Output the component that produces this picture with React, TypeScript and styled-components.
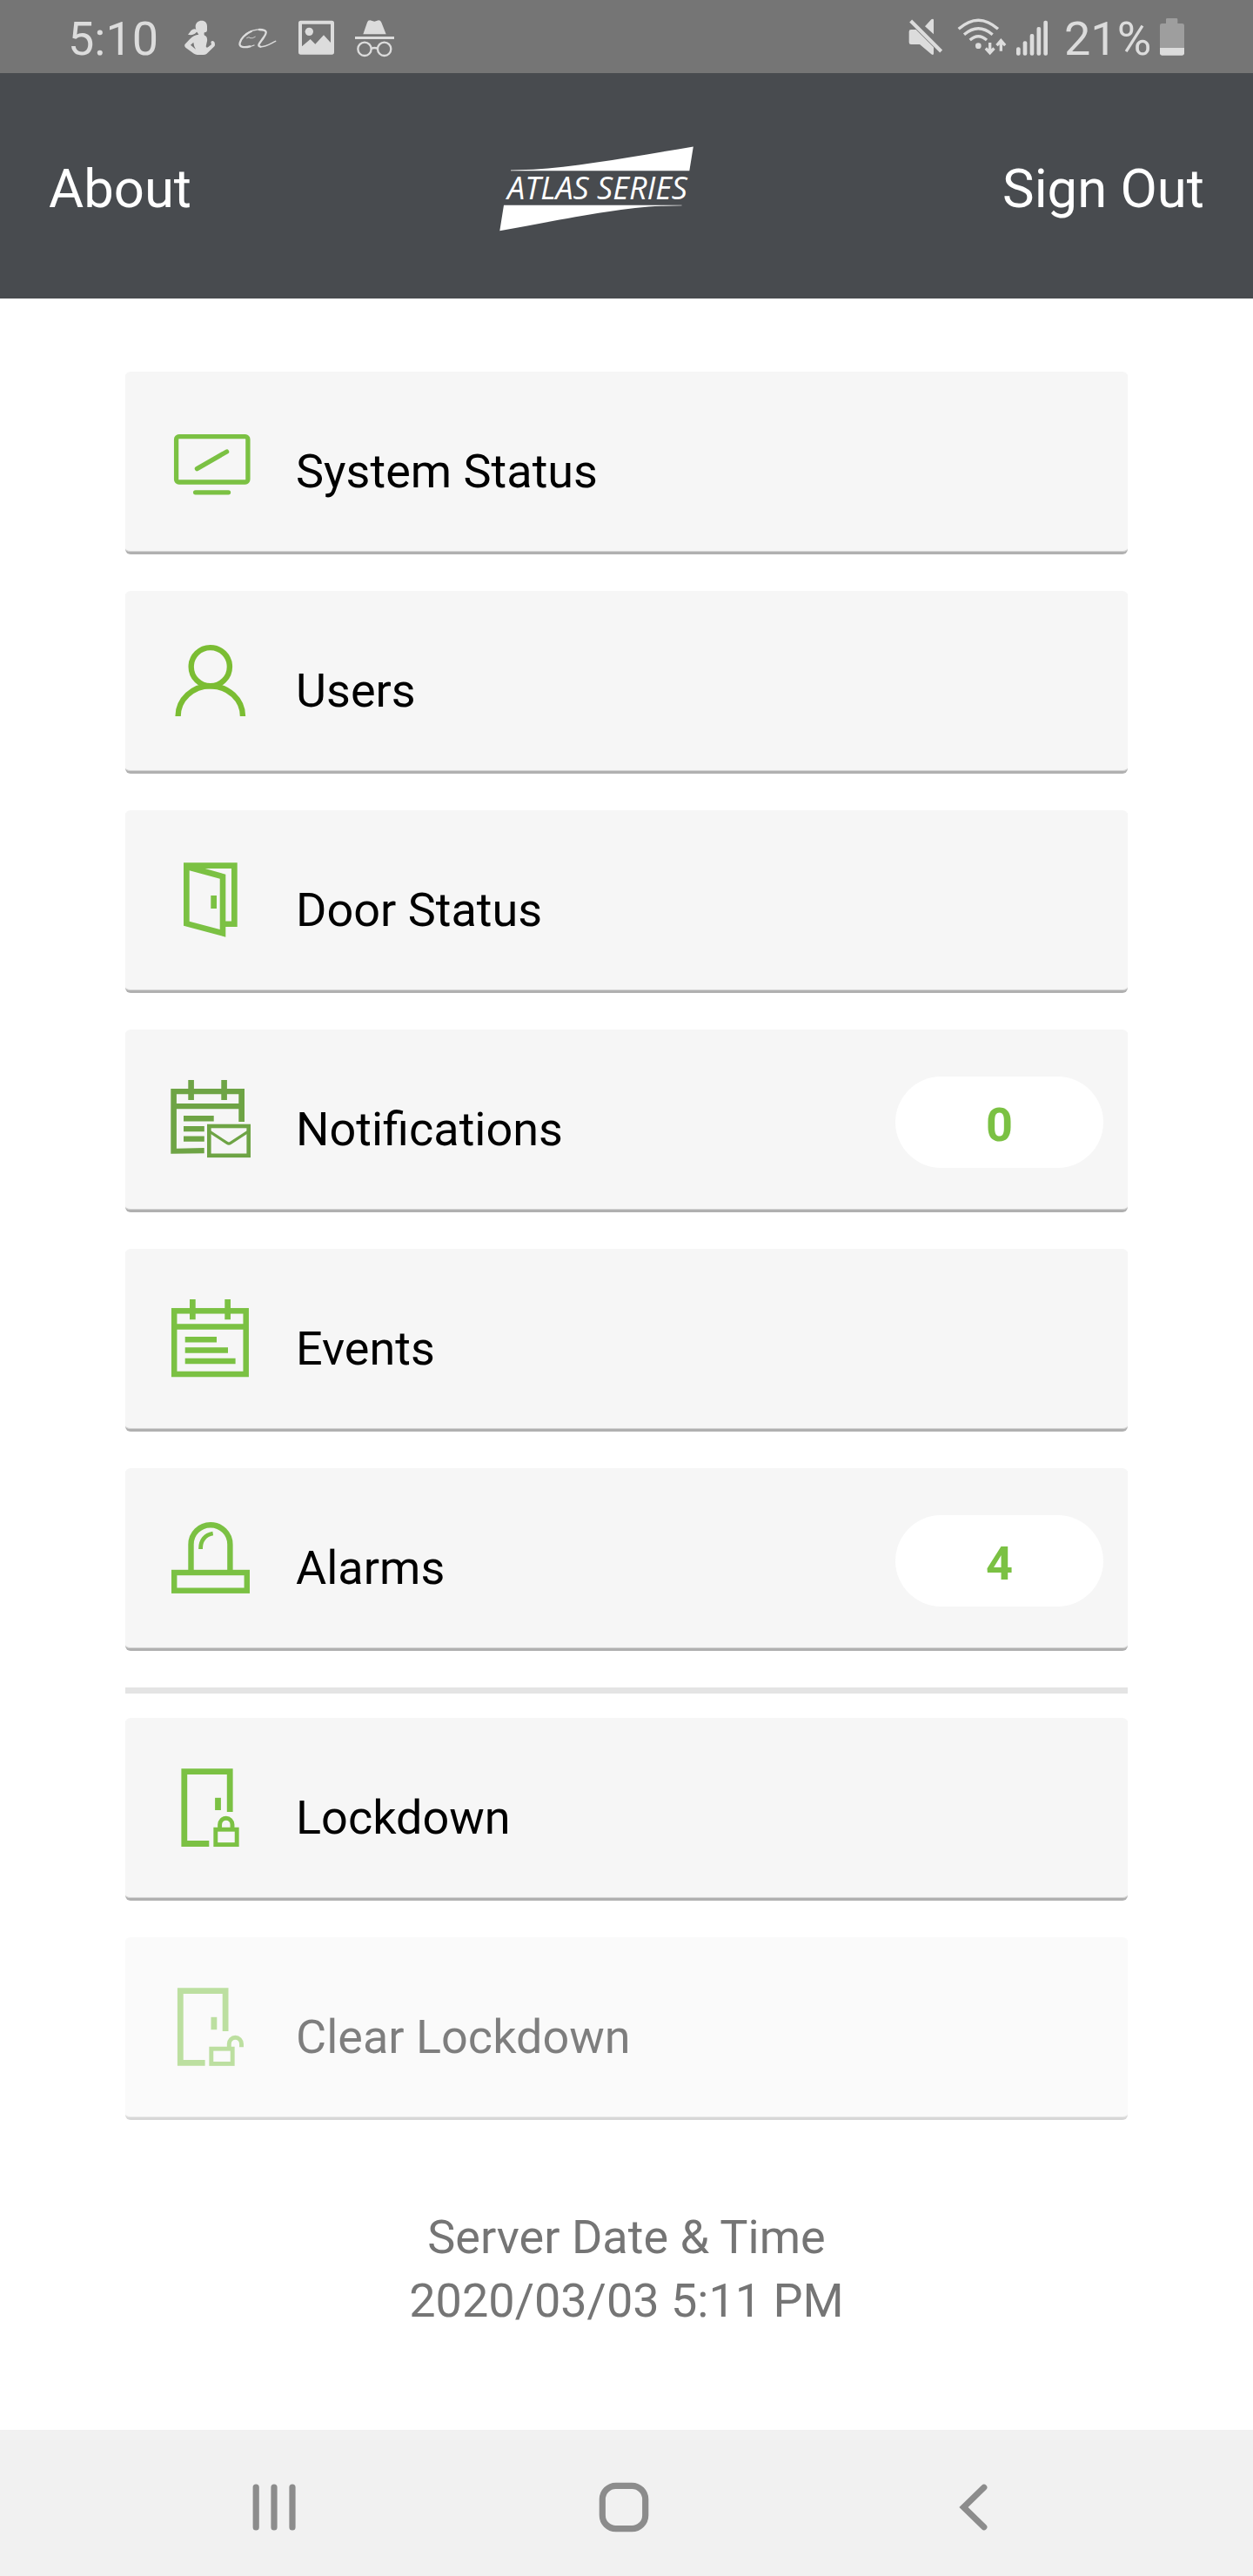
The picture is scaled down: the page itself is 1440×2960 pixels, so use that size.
import React from "react";
import styled, { createGlobalStyle } from "styled-components";

const GREEN = "#7bc143";
const DARK_GREEN = "#6ea445";
const STATUS_INK = "#dcdcdc";

const GlobalStyle = createGlobalStyle`
  body {
    margin: 0;
    background: #fff;
    font-family: Roboto, "Liberation Sans", sans-serif;
  }
`;

const Screen = styled.div`
  display: flex;
  flex-direction: column;
  width: 1440px;
  height: 2960px;
  overflow: hidden;
`;

const StatusBar = styled.div`
  display: flex;
  justify-content: space-between;
  flex: none;
  height: 84px;
  padding: 0 79px 0 78px;
  background: #757575;
  color: ${STATUS_INK};
  font-size: 54px;
  line-height: 89px;
`;

const StatusGroup = styled.div`
  display: flex;
  height: 84px;
`;

const StatusText = styled.span<{ $width: number; $gap?: number }>`
  flex: none;
  width: ${(p) => p.$width}px;
  margin-left: ${(p) => p.$gap ?? 0}px;
  white-space: nowrap;
`;

const StatusGlyph = styled.svg<{ $gap?: number }>`
  display: block;
  flex: none;
  height: 84px;
  margin-left: ${(p) => p.$gap ?? 0}px;
  fill: ${STATUS_INK};
`;

const Header = styled.header`
  display: flex;
  justify-content: space-between;
  align-items: center;
  flex: none;
  box-sizing: border-box;
  height: 259px;
  padding: 7px 56px 0;
  background: #484b4f;
`;

const HeaderLink = styled.a`
  color: #fff;
  font-size: 61.6px;
  line-height: 72px;
  white-space: nowrap;
`;

const Logo = styled.svg`
  display: block;
  flex: none;
`;

const LogoText = styled.text`
  font-family: "Open Sans", "Noto Sans", sans-serif;
  font-style: italic;
  font-size: 36px;
  fill: #fff;
`;

const Menu = styled.main`
  display: flex;
  flex-direction: column;
  gap: 42px;
  padding: 84px 144px 0;
`;

const Card = styled.div<{ $disabled?: boolean }>`
  display: flex;
  align-items: flex-start;
  box-sizing: border-box;
  height: 210px;
  padding: 0 28px 0 48px;
  border-radius: 6px;
  border-bottom: 3px solid #b0b0b0;
  box-shadow: inset 0 -1px 0 #d3d3d3;
  background: #f6f6f6;
  opacity: ${(p) => (p.$disabled ? 0.5 : 1)};
`;

const CardIcon = styled.svg<{ $color?: string }>`
  display: block;
  flex: none;
  width: 104px;
  height: 104px;
  margin-top: 48px;
  color: ${(p) => p.$color ?? GREEN};
`;

const CardLabel = styled.span`
  flex: 1;
  margin: 82px 0 0 44px;
  color: #000;
  font-size: 54px;
  line-height: 65px;
  white-space: nowrap;
`;

const Badge = styled.span`
  width: 239px;
  height: 105px;
  margin-top: 54px;
  border-radius: 53px;
  background: #fff;
  color: ${GREEN};
  font-size: 54px;
  font-weight: 700;
  line-height: 111px;
  text-align: center;
`;

const Divider = styled.hr`
  width: 100%;
  height: 7px;
  margin: 0 0 -14px;
  border: 0;
  background: #e4e4e4;
`;

const ServerTime = styled.footer`
  margin-top: 98px;
  color: #757575;
  font-size: 54px;
  line-height: 73px;
  text-align: center;
`;

const NavBar = styled.nav`
  display: flex;
  justify-content: center;
  flex: none;
  box-sizing: border-box;
  height: 168px;
  margin-top: auto;
  padding: 9px 7px 0 0;
  background: #f1f1f1;
`;

const NavButton = styled.div`
  display: flex;
  align-items: center;
  justify-content: center;
  width: 402px;
`;

const NavGlyph = styled.svg`
  width: 60px;
  height: 60px;
  fill: none;
  stroke: #8c8c8c;
  stroke-width: 7.2;
  stroke-linecap: round;
`;

const MonitorIcon = () => (
  <CardIcon viewBox="0 0 104 104" fill="none" stroke="currentColor" strokeWidth="5.3" strokeLinecap="round">
    <rect x="10.6" y="26.7" width="82.3" height="52.3" rx="3" />
    <path d="M34.4 63.6 68.6 44" />
    <path d="M32.6 90.8H70.5" />
  </CardIcon>
);

const UserIcon = () => (
  <CardIcon viewBox="0 0 104 104" fill="none" stroke="currentColor" strokeWidth="6.4" $color="#7bbd33">
    <circle cx="49.8" cy="39.2" r="22.1" />
    <path d="M12.6 96A37.2 34.8 0 0 1 87 96" />
  </CardIcon>
);

const DoorIcon = () => (
  <CardIcon viewBox="0 0 104 104" fill="currentColor">
    <path
      fillRule="evenodd"
      d="M19 12.3H80.7V86H67.3V97.7L19 84.7ZM43.7 18.9 67.3 25.7V79.4H74V18.9ZM25.7 21.3 60.7 30.7V89L25.7 79.7Z"
    />
    <path d="M50.3 50H57V65H50.3Z" />
  </CardIcon>
);

const NotificationsIcon = () => (
  <CardIcon viewBox="0 0 104 104" fill="currentColor" $color={DARK_GREEN}>
    <path d="M4.3 20H89V58H82.3V26.3H10.9V88.8L42.7 88V94.2L4.3 94.8Z" />
    <path d="M8 37H85V43.3H8ZM24.3 10H30.9V33H24.3ZM62.3 10H68.9V33H62.3Z" />
    <path d="M19 51H53.7V57.4H19ZM19 63H42.8V69.3H19ZM19 74.4H42.8V80.8H19Z" />
    <rect x="48.3" y="63" width="45.4" height="33.8" fill="none" stroke="currentColor" strokeWidth="4.6" />
    <path d="M49.5 69.6 69 82.4Q71 83.8 73 82.4L92.5 69.6" fill="none" stroke="currentColor" strokeWidth="3.2" />
  </CardIcon>
);

const EventsIcon = () => (
  <CardIcon viewBox="0 0 104 104" fill="currentColor">
    <rect x="8.2" y="23.3" width="82.5" height="72.7" fill="none" stroke="currentColor" strokeWidth="6.5" />
    <path d="M8 38.2H91V44.8H8ZM26 10H32.7V33.3H26ZM66.3 10H73V33.3H66.3Z" />
    <path d="M20.7 53H57V59.6H20.7ZM20.7 65.2H70V71.8H20.7ZM20.7 77.7H78.6V84.3H20.7Z" />
  </CardIcon>
);

const AlarmIcon = () => (
  <CardIcon viewBox="0 0 104 104" fill="none" stroke="currentColor" strokeWidth="6.4">
    <rect x="8.2" y="72" width="83.6" height="20.7" />
    <path d="M27.5 70V39.7a22.4 22.4 0 0 1 44.9 0V70" />
    <path d="M38.6 45C38.2 35.5 43.5 28.5 52.7 27" strokeWidth="4.8" />
  </CardIcon>
);

const LockdownIcon = () => (
  <CardIcon viewBox="0 0 104 104" fill="none" stroke="currentColor" strokeWidth="6.8">
    <path d="M48.3 96.5H19.8V13.6H72.2V60" />
    <path d="M58.5 43.8V58" />
    <g strokeWidth="4.9">
      <rect x="55.8" y="80.2" width="24.4" height="17.4" />
      <path d="M60.6 80V74.6a7.2 7.4 0 0 1 14.4 0V80" />
    </g>
  </CardIcon>
);

const ClearLockdownIcon = () => (
  <CardIcon viewBox="0 0 104 104" fill="none" stroke="currentColor" strokeWidth="6.8">
    <path d="M43.6 96.4H15.3V13.6H67.1V60" />
    <path d="M53.9 43.8V58.2" />
    <g strokeWidth="4.9">
      <rect x="50.8" y="80.2" width="24.4" height="17.2" />
      <path d="M71.3 80V74.6a7.1 7.4 0 0 1 14.2 0V78.3" />
    </g>
  </CardIcon>
);

type Item = { label: string; Icon: React.FC; badge?: number; disabled?: boolean };

const mainItems: Item[] = [
  { label: "System Status", Icon: MonitorIcon },
  { label: "Users", Icon: UserIcon },
  { label: "Door Status", Icon: DoorIcon },
  { label: "Notifications", Icon: NotificationsIcon, badge: 0 },
  { label: "Events", Icon: EventsIcon },
  { label: "Alarms", Icon: AlarmIcon, badge: 4 },
];

const lockItems: Item[] = [
  { label: "Lockdown", Icon: LockdownIcon },
  { label: "Clear Lockdown", Icon: ClearLockdownIcon, disabled: true },
];

const MenuCard = ({ label, Icon, badge, disabled }: Item) => (
  <Card $disabled={disabled}>
    <Icon />
    <CardLabel>{label}</CardLabel>
    {badge !== undefined && <Badge>{badge}</Badge>}
  </Card>
);

const SystemStatusBar = () => (
  <StatusBar>
    <StatusGroup>
      <StatusText $width={134}>5:10</StatusText>
      <StatusGlyph width="36" viewBox="636 0 108 252">
        <path
          fillRule="evenodd"
          d="M674 92C674 78 684 71 695 71C707 71 714 79 714 90V105Q713 113 705 111C702 118 704 121 709 124Q716 130 714 142L710 160Q712 167 718 162L729 153Q724 140 733 141Q741 142 741 155Q741 159 736 163L712 186Q708 189 700 189H680Q674 188 669 185L640 164Q634 158 638 152L655 134Q668 120 685 119Q682 115 679 110Q676 112 672 116Q662 123 648 119Q655 112 658 106Q668 97 676 101Q674 97 674 92ZM657 155 667 146Q668 160 675 170Z"
        />
      </StatusGlyph>
      <StatusGlyph width="44" $gap={26} viewBox="822 0 132 252">
        <g fill="none" stroke={STATUS_INK} strokeLinecap="round">
          <path strokeWidth="7" d="M862 160C842 165 823 163 827 148C830 134 845 117 866 108" />
          <path strokeWidth="4" d="M876 156C868 160 862 161 852 161M846 120C860 108 880 101 902 101" />
          <path strokeWidth="7" d="M894 102C924 103 920 113 909 129C897 147 884 158 898 161" />
          <path strokeWidth="4.5" d="M898 161.500C918 161 933 150 950 142" />
          <path strokeWidth="2.500" d="M851 131Q862 125 861 131Q870 134 880 127" />
        </g>
      </StatusGlyph>
      <StatusGlyph width="41" $gap={25} viewBox="1029 0 123 252">
        <path
          fillRule="evenodd"
          d="M1037 71H1144Q1152 71 1152 79V180Q1152 188 1144 188H1037Q1029 188 1029 180V79Q1029 71 1037 71ZM1041 83V160L1070 135 1087 152 1116 121 1140 147V83Z"
        />
        <circle cx="1066" cy="109" r="14" />
      </StatusGlyph>
      <StatusGlyph width="46" $gap={24} viewBox="1224 0 138 252">
        <path d="M1252 118 1266 77Q1268 70 1276 70L1291 74 1305 70Q1312 70 1315 77L1331 118ZM1224 126H1359V135H1224Z" />
        <g fill="none" stroke={STATUS_INK} strokeWidth="7">
          <circle cx="1257" cy="169" r="23" />
          <circle cx="1325" cy="169" r="23" />
          <path d="M1279 168Q1291 162 1303 168" />
        </g>
      </StatusGlyph>
    </StatusGroup>
    <StatusGroup>
      <StatusGlyph width="40" viewBox="132 0 120 252">
        <path d="M189 91 211 67Q219 63 219 70V118ZM134 109Q134 102 141 102H158L219 163V184Q219 192 211 187L171 153H141Q134 153 134 146Z" />
        <path d="M140 72 245 177" fill="none" stroke={STATUS_INK} strokeWidth="12.5" />
      </StatusGlyph>
      <StatusGlyph width="57" $gap={16} viewBox="300 0 171 252">
        <g fill="none" stroke={STATUS_INK} strokeWidth="10">
          <path d="M305 100Q373 39 441 100" />
          <path d="M324 119Q373 77 422 119" />
          <path d="M344 138Q373 112 402 138" />
        </g>
        <circle cx="373" cy="158" r="10" />
        <path d="M408 147h10v22l6-6 7 7-18 20-18-20 7-7 6 6zM446 176v-22l-6 6-7-7 18-21 18 21-7 7-6-6v22z" />
      </StatusGlyph>
      <StatusGlyph width="36" $gap={11} viewBox="504 0 108 252">
        <rect x="504" y="163" width="14" height="28" rx="6" />
        <rect x="527" y="142" width="14" height="49" rx="6" />
        <rect x="551" y="117" width="14" height="74" rx="6" />
        <rect x="574.5" y="93" width="14" height="98" rx="6" />
        <rect x="598" y="71" width="14" height="120" rx="6" />
      </StatusGlyph>
      <StatusText $width={110} $gap={19}>
        21%
      </StatusText>
      <StatusGlyph width="28" viewBox="999 0 84 252">
        <path fill="#9e9e9e" d="M999 88Q999 81 1006 81H1020V67Q1020 63 1024 63H1056Q1060 63 1060 67V81H1076Q1083 81 1083 88V165H999Z" />
        <path d="M999 165H1083V184Q1083 191 1076 191H1006Q999 191 999 184Z" />
      </StatusGlyph>
    </StatusGroup>
  </StatusBar>
);

export default function App() {
  return (
    <Screen>
      <GlobalStyle />
      <SystemStatusBar />
      <Header>
        <HeaderLink>About</HeaderLink>
        <Logo width="224" height="98" viewBox="34 28.5 224 98" fill="#fff">
          <path d="M47 56.7V55.9L73 55.3C125 52 190 40 256.8 29L252.3 56.7Z" />
          <path d="M39 96.2H243.5V96.8L220 97.2C170 99 100 114 34.3 125.8Z" />
          <LogoText x="43" y="89" textLength="207" lengthAdjust="spacingAndGlyphs">
            ATLAS SERIES
          </LogoText>
        </Logo>
        <HeaderLink>Sign Out</HeaderLink>
      </Header>
      <Menu>
        {mainItems.map((item) => (
          <MenuCard key={item.label} {...item} />
        ))}
        <Divider />
        {lockItems.map((item) => (
          <MenuCard key={item.label} {...item} />
        ))}
      </Menu>
      <ServerTime>
        <div>Server Date &amp; Time</div>
        <div>2020/03/03 5:11 PM</div>
      </ServerTime>
      <NavBar>
        <NavButton>
          <NavGlyph viewBox="0 0 60 60">
            <path d="M9.2 7V53M30 7V53M51 7V53" />
          </NavGlyph>
        </NavButton>
        <NavButton>
          <NavGlyph viewBox="0 0 60 60">
            <rect x="5.3" y="5.3" width="49.4" height="49.4" rx="15.5" />
          </NavGlyph>
        </NavButton>
        <NavButton>
          <NavGlyph viewBox="0 0 60 60">
            <path d="M41.8 7.2 18.5 30 41.8 52.8" strokeLinejoin="miter" />
          </NavGlyph>
        </NavButton>
      </NavBar>
    </Screen>
  );
}
